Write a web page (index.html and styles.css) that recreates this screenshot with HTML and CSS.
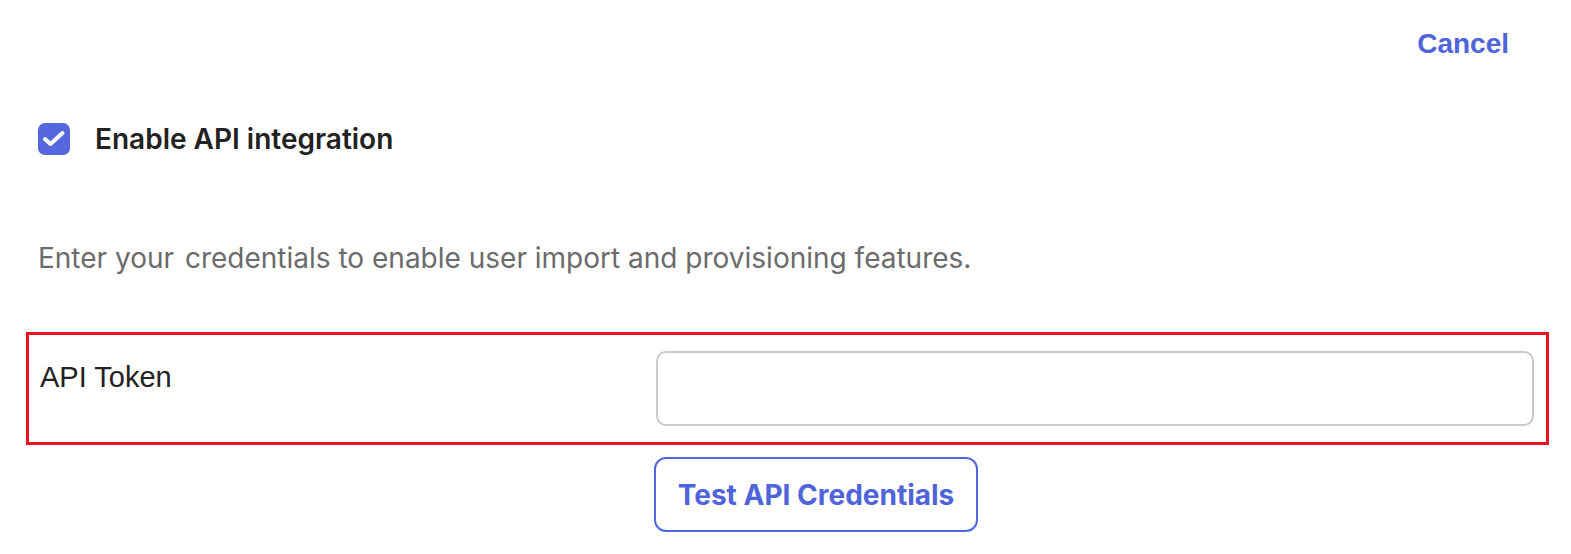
FILE: index.html
```html
<!DOCTYPE html>
<html lang="en">
<head>
<meta charset="utf-8">
<title>API integration</title>
<link rel="stylesheet" href="styles.css">
</head>
<body>
<div class="page">
  <div class="topbar">
    <a class="cancel" href="#">Cancel</a>
  </div>
  <label class="check-row">
    <span class="checkbox">
      <svg width="32" height="32" viewBox="0 0 32 32"><path d="M7 16l5.5 5 12-11" fill="none" stroke="#fff" stroke-width="4" stroke-linecap="round" stroke-linejoin="round"/></svg>
    </span>
    <span class="check-label">Enable API integration</span>
  </label>
  <p class="desc">Enter your <span class="gap"></span>credentials to enable user import and provisioning features.</p>
  <div class="field-row">
    <div class="field-label">API Token</div>
    <div class="field-control"><input class="text-input" type="text"></div>
  </div>
  <div class="btn-row">
    <button class="btn-outline" type="button">Test API Credentials</button>
  </div>
</div>
</body>
</html>
```

FILE: styles.css
```css
html, body {
  margin: 0;
  padding: 0;
  background: #ffffff;
}
body {
  font-family: Inter, "Noto Sans", sans-serif;
  color: #232323;
}
.page {
  padding: 0 22px 0 38px;
}
.topbar {
  height: 86px;
  display: flex;
  justify-content: flex-end;
  align-items: center;
}
.cancel {
  font-family: "Liberation Sans", Arial, sans-serif;
  font-weight: 700;
  font-size: 28px;
  color: #4f63da;
  text-decoration: none;
  margin-right: 40px;
  margin-top: 2px;
}
.check-row {
  margin-top: 37px;
  display: flex;
  align-items: center;
  gap: 25px;
  height: 32px;
}
.checkbox {
  width: 32px;
  height: 32px;
  border-radius: 7px;
  background: #5467dc;
  display: flex;
  align-items: center;
  justify-content: center;
}
.checkbox svg {
  display: block;
}
.check-label {
  font-size: 28px;
  font-weight: 600;
  color: #222222;
}
.desc {
  margin: 86px 0 0 0;
  font-size: 28px;
  line-height: 34px;
  color: #6b6b6b;
}
.gap {
  display: inline-block;
  width: 3px;
}
.field-row {
  margin: 57px 0 0 -12px;
  box-sizing: border-box;
  border: 3px solid #e8141f;
  padding: 16px 12px 16px 11px;
  display: flex;
}
.field-label {
  flex: 0 0 616px;
  font-family: "Liberation Sans", Arial, sans-serif;
  font-size: 29px;
  line-height: 32px;
  padding-top: 10px;
  color: #222222;
}
.field-control {
  flex: 1;
}
.text-input {
  display: block;
  width: 100%;
  height: 75px;
  box-sizing: border-box;
  border: 2px solid #cacaca;
  border-radius: 10px;
  background: #fff;
  outline: none;
  font: inherit;
}
.btn-row {
  margin-top: 12px;
  padding-left: 616px;
}
.btn-outline {
  width: 324px;
  height: 75px;
  box-sizing: border-box;
  border: 2px solid #5366db;
  border-radius: 12px;
  background: #fff;
  color: #4f63da;
  font-family: Inter, "Noto Sans", sans-serif;
  font-size: 28px;
  font-weight: 700;
  padding: 0;
}
```
